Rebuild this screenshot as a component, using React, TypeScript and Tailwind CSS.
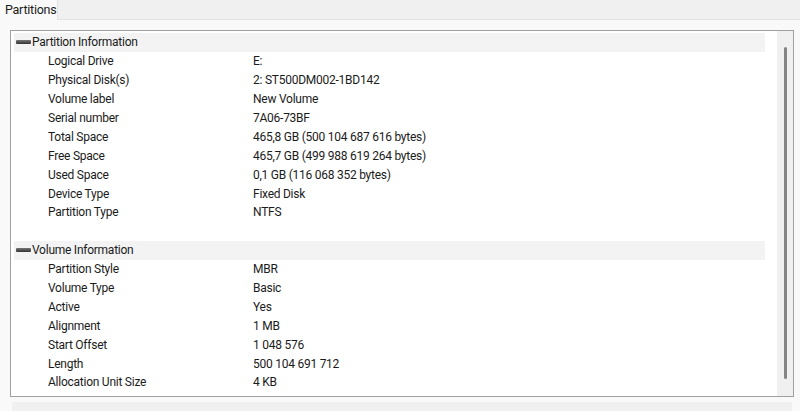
import React from "react";

type Row = [string, string];

const partition: Row[] = [
  ["Logical Drive", "E:"],
  ["Physical Disk(s)", "2: ST500DM002-1BD142"],
  ["Volume label", "New Volume"],
  ["Serial number", "7A06-73BF"],
  ["Total Space", "465,8 GB (500 104 687 616 bytes)"],
  ["Free Space", "465,7 GB (499 988 619 264 bytes)"],
  ["Used Space", "0,1 GB (116 068 352 bytes)"],
  ["Device Type", "Fixed Disk"],
  ["Partition Type", "NTFS"],
];

const volume: Row[] = [
  ["Partition Style", "MBR"],
  ["Volume Type", "Basic"],
  ["Active", "Yes"],
  ["Alignment", "1 MB"],
  ["Start Offset", "1 048 576"],
  ["Length", "500 104 691 712"],
  ["Allocation Unit Size", "4 KB"],
];

function Header({ title }: { title: string }) {
  return (
    <div className="h-[18.9px] flex items-center bg-[#f3f3f3] w-[751px]">
      <div className="ml-[2px] w-[15px] h-[4px] rounded-[1px] bg-gradient-to-b from-[#777] to-[#333]" />
      <span className="ml-[1px]">{title}</span>
    </div>
  );
}

function DataRow({ r }: { r: Row }) {
  return (
    <div className="h-[18.9px] flex items-center">
      <span className="ml-[34px] w-[205px]">{r[0]}</span>
      <span>{r[1]}</span>
    </div>
  );
}

export default function App() {
  return (
    <div
      className="w-[800px] h-[411px] bg-[#f9f9f9] flex flex-col overflow-hidden text-[12px] tracking-[-0.25px] text-[#1b1b1b]"
      style={{ fontFamily: 'Roboto, "Noto Sans", sans-serif' }}
    >
      <div className="h-[20px] bg-[#f0f0f0] border-b border-[#e3e3e3] flex shrink-0">
        <div className="w-[58px] h-[20px] bg-[#f9f9f9] border-r border-[#e3e3e3] flex items-center pl-[5px] text-[12.5px]">
          Partitions
        </div>
      </div>
      <div className="pl-[10px] pt-[10px]">
        <div className="w-[784px] h-[367px] border border-[#a0a0a0] bg-white flex">
          <div className="flex-1 pl-[3px] pt-[2px] leading-none">
            <Header title="Partition Information" />
            {partition.map((r) => (
              <DataRow key={r[0]} r={r} />
            ))}
            <div className="h-[18.9px]" />
            <Header title="Volume Information" />
            {volume.map((r) => (
              <DataRow key={r[0]} r={r} />
            ))}
          </div>
          <div className="w-[16px] bg-[#f0f0f0] flex justify-center pt-[16px]">
            <div className="w-[3px] h-[332px] bg-[#858585] rounded-full" />
          </div>
        </div>
        <div className="mt-[5px] ml-[2px] w-[780px] h-[10px] bg-[#f0f0f0]" />
      </div>
    </div>
  );
}
